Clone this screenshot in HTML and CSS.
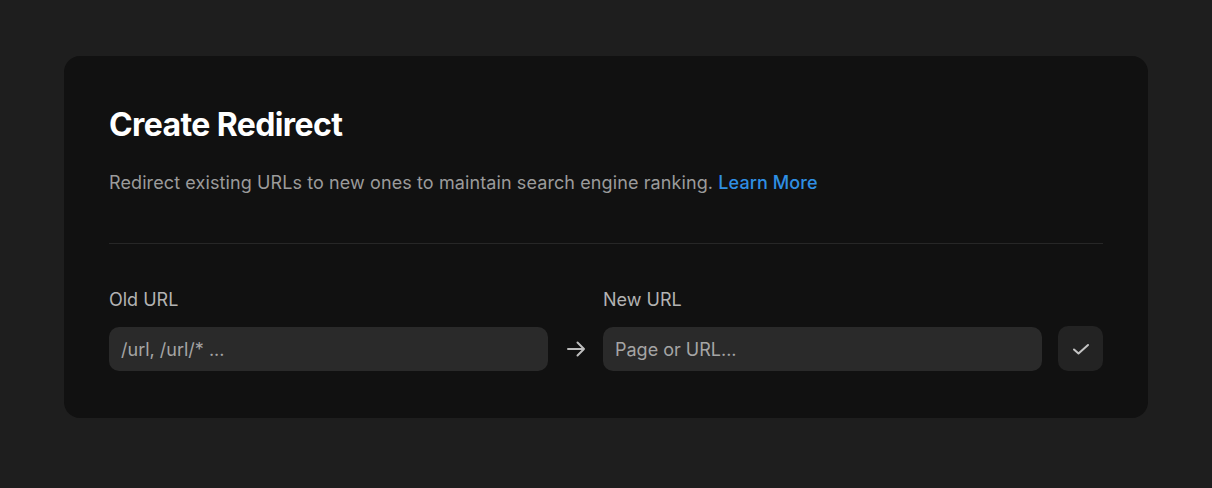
FILE: index.html
```html
<!DOCTYPE html>
<html>
<head>
    <title>Create Redirect</title>
    <meta name="viewport" content="width=device-width, initial-scale=1.0">
    <link rel="stylesheet" href="styles.css">
</head>
<body>
    <div class="panel">
        <h1 class="panel__title">Create Redirect</h1>
        <p class="panel__desc">Redirect existing URLs to new ones to maintain search engine ranking. <a href="#" class="link">Learn More</a></p>
        <hr class="panel__rule">
        <form class="redirect-form">
            <label class="field">
                <span class="field__label">Old URL</span>
                <input class="field__input" type="text" placeholder="/url, /url/* ...">
            </label>
            <span class="redirect-form__arrow">
                <svg width="20" height="20" viewBox="0 0 20 20" fill="none" stroke="currentColor" stroke-width="2" stroke-linecap="round" stroke-linejoin="round">
                    <path d="M2 10h16M11.5 3.5L18 10l-6.5 6.5"/>
                </svg>
            </span>
            <label class="field">
                <span class="field__label">New URL</span>
                <input class="field__input" type="text" placeholder="Page or URL...">
            </label>
            <button class="btn-save" type="button">
                <svg width="18" height="18" viewBox="0 0 18 18" fill="none" stroke="currentColor" stroke-width="2" stroke-linecap="round" stroke-linejoin="round">
                    <path d="M2 9.5l4.5 4L16 5"/>
                </svg>
            </button>
        </form>
    </div>
</body>
</html>
```

FILE: styles.css
```css
body {
    margin: 0;
    padding: 56px 64px;
    background-color: #1e1e1e;
    font-family: Inter, "Noto Sans", sans-serif;
}

.panel {
    background-color: #111111;
    border-radius: 16px;
    padding: 49px 45px 47px;
}

.panel__title {
    margin: 0;
    color: #fff;
    font-size: 32px;
    font-weight: 700;
    letter-spacing: -0.6px;
    line-height: 40px;
}

.panel__desc {
    margin: 25px 0 0;
    color: #9b9b9b;
    font-size: 18px;
    line-height: 26px;
    letter-spacing: 0.1px;
}

.link {
    color: #2f8fe3;
    text-decoration: none;
    font-weight: 500;
}

.panel__rule {
    border: 0;
    border-top: 1px solid #272727;
    margin: 47px 0 45px;
}

.redirect-form {
    display: flex;
    align-items: flex-end;
}

.field {
    flex: 1;
    display: flex;
    flex-direction: column;
    gap: 16px;
}

.field__label {
    color: #b3b3b3;
    font-size: 18px;
    line-height: 22px;
}

.field__input {
    height: 44px;
    box-sizing: border-box;
    border: 0;
    outline: none;
    border-radius: 10px;
    background-color: #2a2a2a;
    padding: 0 12px;
    color: #ddd;
    font-family: inherit;
    font-size: 18px;
}

.field__input::placeholder {
    color: #a5a5a5;
}

.redirect-form__arrow {
    width: 55px;
    height: 44px;
    display: flex;
    align-items: center;
    justify-content: center;
    color: #bdbdbd;
}

.btn-save {
    width: 45px;
    height: 45px;
    margin-left: 16px;
    border: 0;
    border-radius: 10px;
    background-color: #232323;
    color: #c4c4c4;
    display: flex;
    align-items: center;
    justify-content: center;
    cursor: pointer;
}
```
